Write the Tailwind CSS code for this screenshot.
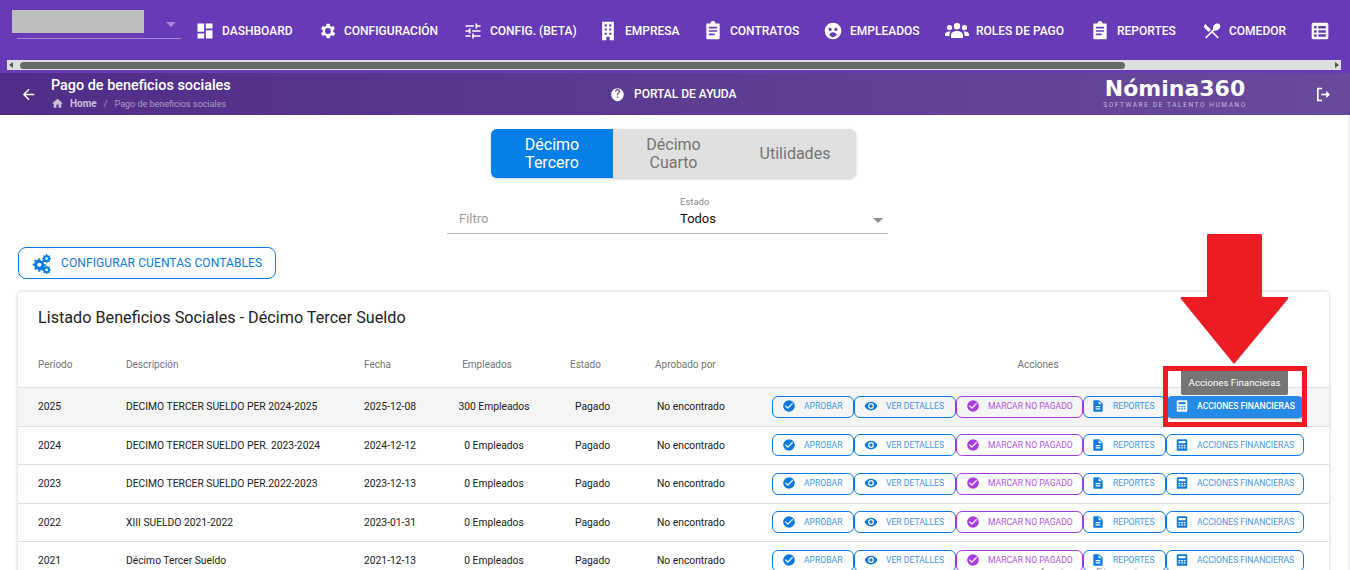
<!DOCTYPE html>
<html lang="en">
<head>
    <meta charset="UTF-8">
    <title>Pago de beneficios sociales</title>
    <script src="https://cdn.jsdelivr.net/npm/@tailwindcss/browser@4"></script>
</head>
<body class="relative h-[570px] overflow-hidden bg-white font-['Roboto',sans-serif] text-[#212121]">

    <!-- Top menu -->
    <nav class="h-[73px] bg-[#673ab7] text-white">
        <div class="flex h-[60px] items-start overflow-hidden whitespace-nowrap">
            <div class="relative mt-[10px] ml-[17px] h-[29px] w-[164px] shrink-0 border-b border-white/40">
                <div class="absolute -left-[5px] top-0 h-[23px] w-[132px] bg-[#bdbdbd]"></div>
                <div class="absolute right-[5px] top-[12px] h-0 w-0 border-x-[5px] border-t-[5px] border-x-transparent border-t-white/40"></div>
            </div>
            <div id="menu" class="ml-[15px] flex h-[61px] items-center text-[12px] font-medium"></div>
        </div>
        <div class="ml-[7px] flex h-[10px] w-[1334px] items-center bg-[#dedede]">
            <div class="ml-[2px] h-0 w-0 border-y-[3px] border-r-[4px] border-y-transparent border-r-[#555]"></div>
            <div class="ml-[7px] h-[7px] w-[1105px] rounded-full bg-[#696969]"></div>
            <div class="ml-auto mr-[2px] h-0 w-0 border-y-[3px] border-l-[4px] border-y-transparent border-l-[#555]"></div>
        </div>
    </nav>

    <!-- Breadcrumb header -->
    <header class="flex h-[42px] items-center bg-gradient-to-r from-[#502d88] to-[#684a9b] text-white">
        <svg class="ml-[20px] h-[17px] w-[17px]" viewBox="0 0 24 24" fill="currentColor"><path d="M20 11H7.83l5.59-5.59L12 4l-8 8 8 8 1.41-1.41L7.83 13H20v-2z"/></svg>
        <div class="ml-[14px] w-[310px] self-start pt-[4px]">
            <h1 class="text-[14.4px] font-medium leading-[18px]">Pago de beneficios sociales</h1>
            <div class="mt-[2px] flex items-center text-[9px] leading-[12px] text-white/50">
                <svg class="mr-[6px] h-[13px] w-[13px] text-white/70" viewBox="0 0 24 24" fill="currentColor"><path d="M10 20v-6h4v6h5v-8h3L12 3 2 12h3v8z"/></svg>
                <span class="text-[10px] font-bold text-white/70">Home</span>
                <span class="mx-[7px]">/</span>
                <span>Pago de beneficios sociales</span>
            </div>
        </div>
        <div class="ml-[249px] flex w-[137px] items-center whitespace-nowrap text-[12px] font-medium">
            <svg class="mr-[9px] h-[15px] w-[15px] shrink-0" viewBox="0 0 24 24" fill="currentColor"><path d="M12 2C6.48 2 2 6.48 2 12c0 3.6 2 7 5 9l5 2 5-2c3-2 5-5.4 5-9 0-5.52-4.48-10-10-10zm1 15h-2v-2h2v2zm2.07-7.75-.9.92C13.45 10.9 13 11.5 13 13h-2v-.5c0-1.1.45-2.1 1.17-2.83l1.24-1.26c.37-.36.59-.86.59-1.41 0-1.1-.9-2-2-2s-2 .9-2 2H8c0-2.21 1.79-4 4-4s4 1.79 4 4c0 .88-.36 1.68-.93 2.25z"/></svg>
            PORTAL DE AYUDA
        </div>
        <div class="ml-[356px] w-[144px] self-start whitespace-nowrap pt-[5px] text-center">
            <div class="font-['DejaVu_Sans',sans-serif] text-[22px] font-bold leading-[22px]">Nómina360</div>
            <div class="mt-[1px] text-[6.5px] leading-[8px] tracking-[1.6px] text-white/60">SOFTWARE DE TALENTO HUMANO</div>
        </div>
        <svg class="ml-[68px] h-[17px] w-[17px]" viewBox="0 0 24 24" fill="none" stroke="currentColor" stroke-width="2.4"><path d="M10 3.5H4v17h6"/><path d="M9 12h11"/><path d="M16 7.5 20.5 12 16 16.5" fill="currentColor" stroke-width="1"/></svg>
    </header>

    <main class="w-[1347px] px-[18px]">
        <!-- Tabs -->
        <div class="mt-[14px] flex justify-center">
            <div class="flex h-[49px] overflow-hidden rounded-[6px] bg-[#e0e0e0] text-[16px] leading-[18px] text-[#757575] shadow-[0_1px_3px_rgba(0,0,0,0.2)]">
                <div class="flex w-[122px] items-center justify-center bg-[#037fe8] text-center text-white">Décimo<br>Tercero</div>
                <div class="flex w-[121px] items-center justify-center text-center">Décimo<br>Cuarto</div>
                <div class="flex w-[122px] items-center justify-center text-center">Utilidades</div>
            </div>
        </div>

        <!-- Filters -->
        <div class="mt-[18px] ml-[429px] flex h-[38px] w-[441px] border-b border-[#bdbdbd]">
            <div class="w-[233px] pl-[12px] pt-[15px] text-[13px] leading-[16px] text-[#9e9e9e]">Filtro</div>
            <div class="relative flex-1">
                <div class="text-[9.5px] leading-[12px] text-[#8a8a8a]">Estado</div>
                <div class="mt-[3px] text-[13px] leading-[16px] text-[#111]">Todos</div>
                <div class="absolute right-[5px] top-[22px] h-0 w-0 border-x-[5px] border-t-[5px] border-x-transparent border-t-[#8a8a8a]"></div>
            </div>
        </div>

        <!-- Accounts button -->
        <button class="mt-[13px] flex h-[32px] w-[258px] items-center rounded-[8px] border border-[#0b7be0] pl-[12px] text-[12px] tracking-[0.1px] text-[#0b7be0]">
            <svg class="mr-[9px] h-[21px] w-[21px]" viewBox="0 0 24 24" fill="currentColor"><path d="M10.5 6.5l.4 1.900 1.300.6 1.700-1 1.500 1.500-1 1.700.6 1.400 1.900.4v2.100l-1.900.4-.6 1.400 1 1.700-1.500 1.500-1.700-1-1.300.5-.4 1.900H8.400L8 18.900l-1.400-.5-1.600 1-1.500-1.500 1-1.700-.6-1.400L2 14.400v-2.100l1.900-.4.6-1.400-1-1.700L5 7.300l1.600 1 1.400-.6.4-1.900zM9.500 11a2.400 2.400 0 1 0 0 4.800 2.400 2.400 0 0 0 0-4.800z"/><path fill-rule="evenodd" d="M18.500 1.500l.3 1.100 1.100.4 1-.5.9.9-.5 1 .4 1.100 1.100.3v1.300l-1.100.3-.4 1.100.5 1-.9.9-1-.5-1.100.4-.3 1.100h-1.300l-.3-1.100-1.100-.4-1 .5-.9-.9.5-1-.4-1.100-1.100-.3V5.800l1.100-.3.4-1.100-.5-1 .9-.9 1 .5 1.100-.4.3-1.100zm-.65 3.300a1.600 1.600 0 1 0 0 3.200 1.600 1.600 0 0 0 0-3.200zM18.500 14.500l.3 1 1 .4 1-.5.9.9-.5 1 .4 1 1 .3v1.300l-1 .3-.4 1 .5 1-.9.9-1-.5-1 .4-.3 1h-1.300l-.3-1-1-.4-1 .5-.9-.9.5-1-.4-1-1-.3v-1.300l1-.3.4-1-.5-1 .9-.9 1 .5 1-.4.3-1zm-.65 3.200a1.600 1.600 0 1 0 0 3.200 1.600 1.600 0 0 0 0-3.200z"/></svg>
            CONFIGURAR CUENTAS CONTABLES
        </button>

        <!-- Table card -->
        <section class="mt-[13px] rounded-t-[4px] bg-white shadow-[0_0_4px_rgba(0,0,0,0.22)]">
            <h2 class="pl-[20px] pt-[16px] text-[16.2px] leading-[20px] text-[#222]">Listado Beneficios Sociales - Décimo Tercer Sueldo</h2>
            <div class="mt-[14px] grid h-[45px] grid-cols-[88px_238px_76px_94px_111px_127px_532px] items-center pl-[20px] text-[10px] text-[#757575]">
                <div>Período</div>
                <div>Descripción</div>
                <div>Fecha</div>
                <div class="text-center">Empleados</div>
                <div class="pl-[36px]">Estado</div>
                <div class="pl-[10px]">Aprobado por</div>
                <div class="text-center">Acciones</div>
            </div>
            <div id="rows" class="border-t border-[#e0e0e0]"></div>
        </section>
    </main>

    <!-- Page edge -->
    <div class="absolute right-0 top-[115px] h-[455px] w-[2px] bg-[#eef2f7]"></div>

    <!-- Text lying under the last row, only its top shows -->
    <div class="absolute left-[1039px] top-[565px] text-[11px] tracking-[1px] text-[#9e9e9e]">Acciones Financieras</div>

    <!-- Red annotation -->
    <svg class="absolute left-[1180px] top-[234px] h-[132px] w-[109px]" viewBox="0 0 109 132" fill="#ed1c24"><path d="M27 1q0-1 1-1h53q1 0 1 1v62h25q2 0 1 2L54 130 1 65q-1-2 1-2h25z"/></svg>
    <div class="absolute left-[1163px] top-[366px] h-[61px] w-[144px] border-[5px] border-[#ed1c24]"></div>
    <div class="absolute left-[1181px] top-[371px] flex h-[24px] w-[107px] items-center justify-center rounded-b-[2px] bg-[#757575] text-[9.7px] text-white">Acciones Financieras</div>

    <script>
        const menuIcons = {
            dashboard: '<path d="M3 3h8v10H3zM13 3h8v6h-8zM13 11h8v10h-8zM3 15h8v6H3z"/>',
            gear: '<path d="M19.4 13a7.600 7.600 0 0 0 0-2l2.100-1.600-2-3.500-2.500 1a7.600 7.600 0 0 0-1.700-1L15.400 3.300h-4l-.4 2.600a7.600 7.600 0 0 0-1.700 1l-2.500-1-2 3.500L6.900 11a7.600 7.600 0 0 0 0 2l-2.100 1.600 2 3.500 2.500-1a7.600 7.600 0 0 0 1.700 1l.4 2.600h4l.4-2.600a7.600 7.600 0 0 0 1.700-1l2.500 1 2-3.500zM13.100 15.500a3.500 3.500 0 1 1 0-7 3.500 3.500 0 0 1 0 7z"/>',
            tune: '<path d="M3 17v2h6v-2H3zM3 5v2h10V5H3zm10 16v-2h8v-2h-8v-2h-2v6h2zM7 9v2H3v2h4v2h2V9H7zm14 4v-2H11v2h10zm-6-4h2V7h4V5h-4V3h-2v6z"/>',
            building: '<path fill-rule="evenodd" d="M5 1h14v22h-5v-4h-4v4H5zM8 4v2.500h2.500V4zm5.500 0v2.500H16V4zM8 9v2.500h2.500V9zm5.500 0v2.500H16V9zM8 14v2.500h2.500V14zm5.500 0v2.500H16V14z"/>',
            clipboard: '<path fill-rule="evenodd" d="M9 3a3 3 0 0 1 6 0h4a1 1 0 0 1 1 1v17a1 1 0 0 1-1 1H5a1 1 0 0 1-1-1V4a1 1 0 0 1 1-1zM7 7v2h10V7zm0 4v2h10v-2zm0 4v2h7v-2z"/>',
            face: '<path fill-rule="evenodd" d="M12 2a10 10 0 1 0 0 20 10 10 0 0 0 0-20zM8.500 8a2 2 0 1 1 0 4 2 2 0 0 1 0-4zm7 0a2 2 0 1 1 0 4 2 2 0 0 1 0-4zM12 13.500c1.800 0 3.500.8 4.500 2.500-1 2-2.700 3.500-4.500 3.500S8.500 18 7.500 16c1-1.700 2.700-2.500 4.500-2.500z"/>',
            people: '<path d="M12 4a3.200 3.200 0 1 1 0 6.400A3.200 3.200 0 0 1 12 4zM4.500 6a2.600 2.600 0 1 1 0 5.200 2.600 2.600 0 0 1 0-5.200zm15 0a2.600 2.600 0 1 1 0 5.200 2.600 2.600 0 0 1 0-5.200zM12 12c3.500 0 6 1.700 6 4v3H6v-3c0-2.300 2.500-4 6-4zM4.500 12.500c.4 0 .8 0 1.100.1-.8.900-1.100 2-1.100 3.400v1H0v-1.800c0-1.500 2-2.700 4.500-2.700zm15 0c2.500 0 4.500 1.200 4.500 2.700V17h-4.500v-1c0-1.400-.3-2.500-1.100-3.400.3-.1.700-.1 1.100-.1z"/>',
            dining: '<path d="M8.100 13.300l2.800-2.800L3.900 3.500a4 4 0 0 0 0 5.700zm6.800-1.900c1.500.7 3.700.2 5.300-1.400 1.900-1.900 2.300-4.700.8-6.200s-4.200-1.100-6.200.8c-1.600 1.600-2.100 3.800-1.400 5.300L3.600 19.700 5 21.100l6.900-6.900 6.900 6.900 1.400-1.400-6.900-6.900z"/>',
            table: '<path fill-rule="evenodd" d="M4 2h16a2 2 0 0 1 2 2v16a2 2 0 0 1-2 2H4a2 2 0 0 1-2-2V4a2 2 0 0 1 2-2zm1 4v3h3V6zm5 0v3h9V6zm-5 5v3h3v-3zm5 0v3h9v-3zm-5 5v3h3v-3zm5 0v3h9v-3z"/>'
        };

        // width = distance to the next item's start
        const menu = [
            { icon: "dashboard", label: "DASHBOARD", width: 122 },
            { icon: "gear", label: "CONFIGURACIÓN", width: 146 },
            { icon: "tune", label: "CONFIG. (BETA)", width: 135 },
            { icon: "building", label: "EMPRESA", width: 105 },
            { icon: "clipboard", label: "CONTRATOS", width: 120 },
            { icon: "face", label: "EMPLEADOS", width: 126 },
            { icon: "people", label: "ROLES DE PAGO", width: 141, wide: true },
            { icon: "clipboard", label: "REPORTES", width: 112 },
            { icon: "dining", label: "COMEDOR", width: 108 },
            { icon: "table", label: "", width: 20 }
        ];

        document.getElementById("menu").innerHTML = menu.map(item => `
            <div class="flex shrink-0 items-center" style="width:${item.width}px">
                <svg class="${item.wide ? "-ml-[5px] mr-[7px] h-[24px] w-[24px]" : "-ml-[1px] mr-[7px] h-[20px] w-[20px]"} shrink-0" viewBox="0 0 24 24" fill="currentColor">${menuIcons[item.icon]}</svg>
                <span>${item.label}</span>
            </div>`).join("");

        const rows = [
            ["2025", "DECIMO TERCER SUELDO PER 2024-2025", "2025-12-08", "300 Empleados"],
            ["2024", "DECIMO TERCER SUELDO PER. 2023-2024", "2024-12-12", "0 Empleados"],
            ["2023", "DECIMO TERCER SUELDO PER.2022-2023", "2023-12-13", "0 Empleados"],
            ["2022", "XIII SUELDO 2021-2022", "2023-01-31", "0 Empleados"],
            ["2021", "Décimo Tercer Sueldo", "2021-12-13", "0 Empleados"]
        ];

        const actionIcons = {
            check: '<path d="M12 2a10 10 0 1 0 0 20 10 10 0 0 0 0-20zm-2 15-5-5 1.400-1.400 3.600 3.600 7.600-7.600L19 8z"/>',
            eye: '<path fill-rule="evenodd" d="M12 4.500C7 4.500 2.700 7.600 1 12c1.700 4.400 6 7.500 11 7.500s9.300-3.100 11-7.500c-1.700-4.400-6-7.500-11-7.500zM12 17a5 5 0 1 1 0-10 5 5 0 0 1 0 10zm0-8a3 3 0 1 0 0 6 3 3 0 0 0 0-6z"/>',
            file: '<path fill-rule="evenodd" d="M14 2H6a2 2 0 0 0-2 2v16a2 2 0 0 0 2 2h12a2 2 0 0 0 2-2V8zM8 12h8v2H8zm0 4h8v2H8zm5-7V3.500L18.500 9z"/>',
            calc: '<path fill-rule="evenodd" d="M5 2h14a2 2 0 0 1 2 2v16a2 2 0 0 1-2 2H5a2 2 0 0 1-2-2V4a2 2 0 0 1 2-2zm1 3v4h12V5zm0 7v2h3v-2zm4.500 0v2h3v-2zm4.500 0v2h3v-2zM6 16v2h3v-2zm4.500 0v2h3v-2zm4.500 0v2h3v-2z"/>'
        };

        const blue = "border-[#0b7be0] text-[#3f97ea]";
        const purple = "border-[#a93de0] text-[#b256e6]";

        function actionButton(icon, label, width, pad, tone, iconTone) {
            return `<button class="flex h-[22px] shrink-0 items-center whitespace-nowrap rounded-[6px] border text-[8.6px] ${tone}" style="width:${width}px;padding-left:${pad}px">
                <svg class="mr-[8px] -mt-[1px] h-[14px] w-[14px] shrink-0 ${iconTone}" viewBox="0 0 24 24" fill="currentColor">${actionIcons[icon]}</svg>${label}
            </button>`;
        }

        function renderRows() {
            document.getElementById("rows").innerHTML = rows.map((row, index) => {
                const last = index === 0
                    ? `<button class="flex h-[22px] w-[138px] shrink-0 items-center whitespace-nowrap rounded-[6px] bg-[#2589e6] pl-[9px] text-[8.6px] font-medium text-white shadow-[0_1px_1px_rgba(0,0,0,0.3)]">
                        <svg class="mr-[8px] -mt-[1px] h-[14px] w-[14px] shrink-0" viewBox="0 0 24 24" fill="currentColor">${actionIcons.calc}</svg>ACCIONES FINANCIERAS
                       </button>`
                    : actionButton("calc", "ACCIONES FINANCIERAS", 138, 8, blue, "text-[#0b7be0]");
                return `
                <div class="grid h-[38.5px] grid-cols-[88px_238px_76px_94px_111px_127px_532px] items-center border-b border-[#e0e0e0] pl-[20px] text-[10.3px] text-[#212121] ${index === 0 ? "bg-[#f5f5f5]" : ""}">
                    <div>${row[0]}</div>
                    <div class="whitespace-nowrap">${row[1]}</div>
                    <div>${row[2]}</div>
                    <div class="pl-[14px] text-center whitespace-nowrap">${row[3]}</div>
                    <div class="pl-[41px]">Pagado</div>
                    <div class="pl-[12px]">No encontrado</div>
                    <div class="flex">
                        ${actionButton("check", "APROBAR", 82, 9, blue, "text-[#0b7be0]")}
                        ${actionButton("eye", "VER DETALLES", 102, 9, blue, "text-[#0b7be0]")}
                        ${actionButton("check", "MARCAR NO PAGADO", 127, 9, purple, "text-[#a93de0]")}
                        ${actionButton("file", "REPORTES", 83, 7, blue, "text-[#0b7be0]")}
                        ${last}
                    </div>
                </div>`;
            }).join("");
        }

        renderRows();
    </script>

</body>
</html>
